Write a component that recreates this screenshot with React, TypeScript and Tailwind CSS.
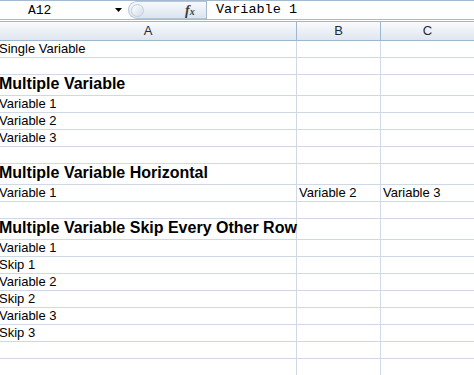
import React from "react";

type Row = { a?: string; b?: string; c?: string; h?: boolean };

const rows: Row[] = [
  { a: "Single Variable" },
  {},
  { a: "Multiple Variable", h: true },
  { a: "Variable 1" },
  { a: "Variable 2" },
  { a: "Variable 3" },
  {},
  { a: "Multiple Variable Horizontal", h: true },
  { a: "Variable 1", b: "Variable 2", c: "Variable 3" },
  {},
  { a: "Multiple Variable Skip Every Other Row", h: true },
  { a: "Variable 1" },
  { a: "Skip 1" },
  { a: "Variable 2" },
  { a: "Skip 2" },
  { a: "Variable 3" },
  { a: "Skip 3" },
  {},
  {},
];

export default function App() {
  const arial = { fontFamily: '"Liberation Sans", Arial, sans-serif' };
  const mono = { fontFamily: '"Liberation Mono", "DejaVu Sans Mono", monospace' };
  return (
    <div className="w-[474px] h-[375px] overflow-hidden bg-white" style={arial}>
      {/* formula bar */}
      <div className="flex h-[20px] border-t border-b border-[#a4b8cf] bg-white">
        <div className="relative w-[128px] h-full flex items-center" >
          <span className="pl-[28px] text-[13px] leading-none text-black" style={mono}>A12</span>
          <svg className="absolute left-[115px] top-[7px]" width="7" height="4" viewBox="0 0 7 4">
            <path d="M0 0 H7 L3.5 4 Z" fill="#000" />
          </svg>
        </div>
        <div className="relative w-[78px] h-full rounded-l-full border border-r-0 border-[#b7c7da] bg-gradient-to-b from-[#f7f9fc] to-[#dbe4ef] flex items-center">
          <div className="absolute left-[2px] top-[2px] w-[13px] h-[13px] rounded-full border border-[#c3cfdd] bg-gradient-to-br from-[#ffffff] to-[#d3dce8]" />
          <span
            className="absolute left-[56px] top-[0px] text-[14px] italic font-bold leading-[17px] text-[#3b3b3b]"
            style={{ fontFamily: '"Liberation Serif", serif' }}
          >
            f<span className="text-[10px]">x</span>
          </span>
        </div>
        <div className="w-px h-full bg-[#a4b8cf]" />
        <div className="flex-1 h-full flex items-center pl-[9px]">
          <span className="text-[13.5px] leading-none text-black" style={mono}>Variable 1</span>
        </div>
      </div>
      <div className="h-px bg-white" />
      {/* column headers */}
      <div className="flex h-[20px] border-t border-b border-[#9eb6ce] bg-gradient-to-b from-[#f9fbfd] to-[#dfe6ef] text-[13px] text-[#1f2a3a]">
        <div className="w-[297px] border-r border-[#9eb6ce] flex items-center justify-center">A</div>
        <div className="w-[84px] border-r border-[#9eb6ce] flex items-center justify-center">B</div>
        <div className="flex-1 flex items-center justify-center">C</div>
      </div>
      {/* grid */}
      {rows.map((r, i) => (
        <div
          key={i}
          className={`flex border-b border-[#d0d7e5] ${r.h ? "h-[21px] text-[16px] font-bold" : "h-[17px] text-[13px]"} text-black`}
        >
          <div className="w-[297px] border-r border-[#d0d7e5] flex items-end whitespace-nowrap overflow-visible">
            {r.a && <span className={`-ml-[1px] leading-none ${r.h ? "pb-[3px]" : "pb-[2px]"}`}>{r.a}</span>}
          </div>
          <div className="w-[84px] border-r border-[#d0d7e5] flex items-end pl-[2px] whitespace-nowrap">
            {r.b && <span className="leading-none pb-[2px]">{r.b}</span>}
          </div>
          <div className="flex-1 flex items-end pl-[2px] whitespace-nowrap">
            {r.c && <span className="leading-none pb-[2px]">{r.c}</span>}
          </div>
        </div>
      ))}
    </div>
  );
}
